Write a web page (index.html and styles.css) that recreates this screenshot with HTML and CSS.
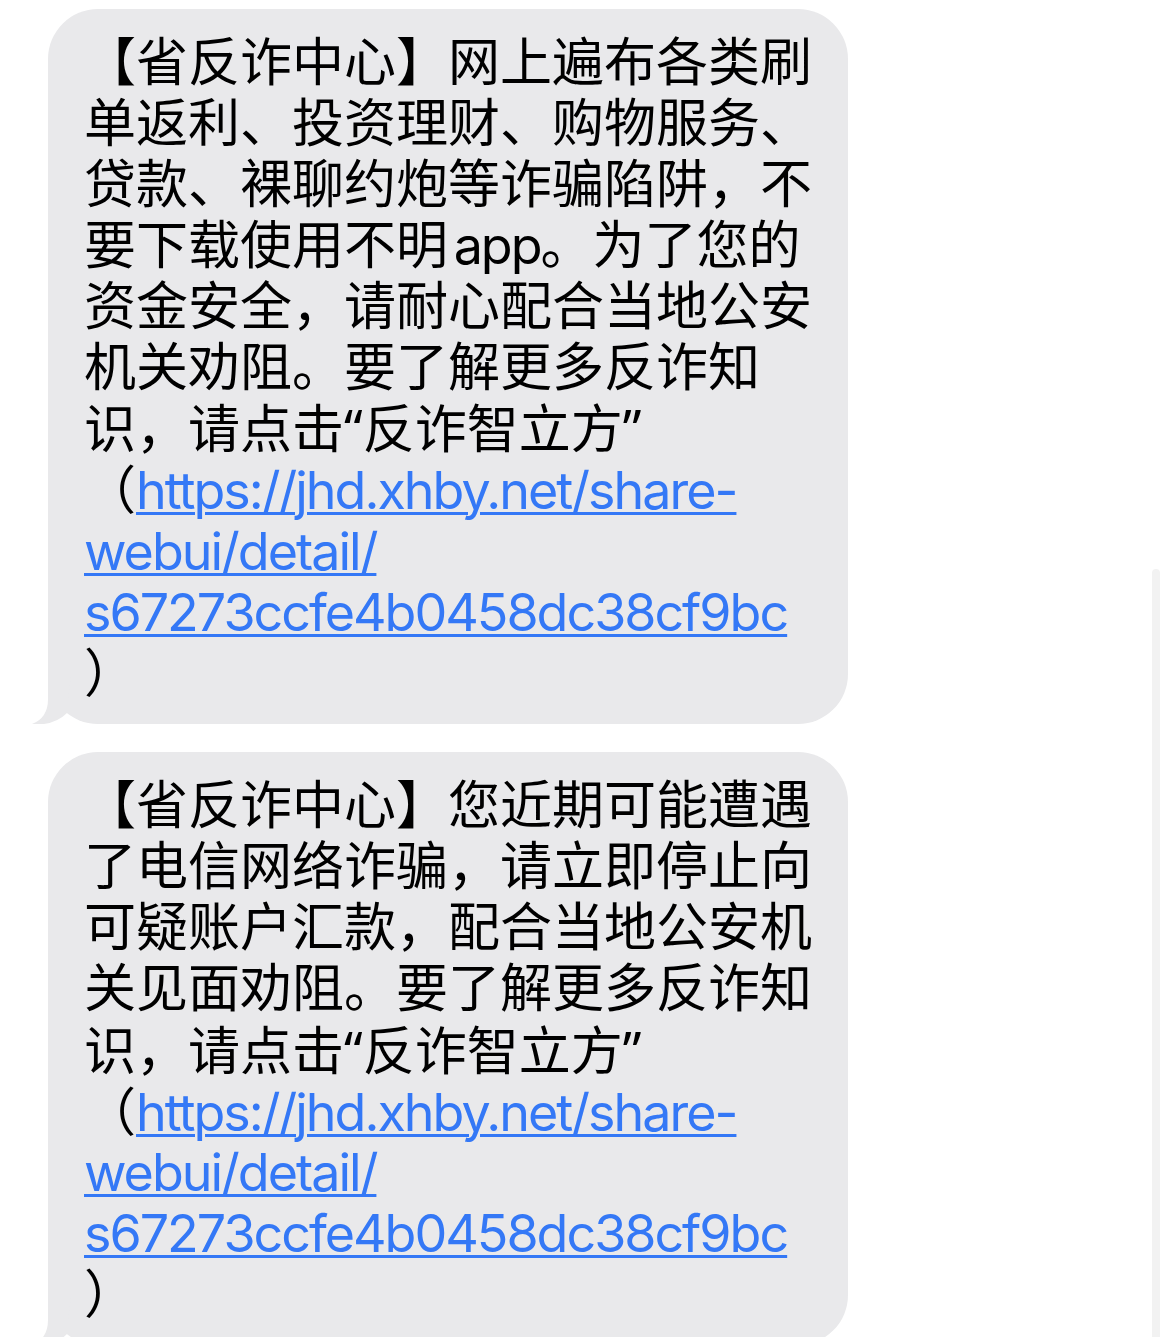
FILE: index.html
```html
<!DOCTYPE html>
<html lang="zh-CN">
<head>
<meta charset="utf-8">
<title>短信</title>
<link rel="stylesheet" href="styles.css">
</head>
<body>
<div class="thread">
  <div class="bubble">
    <p class="msg">【省反诈中心】网上遍布各类刷<br>单返利、投资理财、购物服务、<br>贷款、裸聊约炮等诈骗陷阱，不<br>要下载使用不明<span class="lat"> app</span>。为了您的<br>资金安全，请耐心配合当地公安<br>机关劝阻。要了解更多反诈知<br>识，请点击<span class="q">“</span>反诈智立方<span class="q">”</span><br>（<a class="link" href="#">https://jhd.xhby.net/share-<br>webui/detail/<br>s67273ccfe4b0458dc38cf9bc</a><br>）</p>
    <svg class="tail" viewBox="0 0 40 62" width="40" height="62" aria-hidden="true"><path d="M16,0 L16,37 Q16,56 0,62 L12,62 Q26,60 35,51 L40,0 Z"/></svg>
  </div>
  <div class="bubble">
    <p class="msg">【省反诈中心】您近期可能遭遇<br>了电信网络诈骗，请立即停止向<br>可疑账户汇款，配合当地公安机<br>关见面劝阻。要了解更多反诈知<br>识，请点击<span class="q">“</span>反诈智立方<span class="q">”</span><br>（<a class="link" href="#">https://jhd.xhby.net/share-<br>webui/detail/<br>s67273ccfe4b0458dc38cf9bc</a><br>）</p>
    <svg class="tail" viewBox="0 0 40 62" width="40" height="62" aria-hidden="true"><path d="M16,0 L16,37 Q16,56 0,62 L12,62 Q26,60 35,51 L40,0 Z"/></svg>
  </div>
</div>
<div class="scroll-indicator"></div>
</body>
</html>
```

FILE: styles.css
```css
html, body {
  margin: 0;
  padding: 0;
  background: #ffffff;
}

body {
  width: 1170px;
  height: 1337px;
  overflow: hidden;
  position: relative;
}

.thread {
  display: flex;
  flex-direction: column;
  align-items: flex-start;
  gap: 28px;
  padding: 9px 0 0 48px;
}

.bubble {
  position: relative;
  width: 800px;
  box-sizing: border-box;
  padding: 24px 30px 19px 36px;
  background: #e9e9eb;
  border-radius: 50px;
}

.msg {
  margin: 0;
  font-family: "Inter", "Noto Sans CJK SC", sans-serif;
  font-size: 52px;
  line-height: 60.9px;
  color: #000000;
  white-space: nowrap;
}

.lat {
  letter-spacing: -2px;
  word-spacing: -7px;
}

.q {
  font-family: "Noto Sans", "Noto Sans CJK SC", sans-serif;
}

.link {
  color: #3478f6;
  letter-spacing: -2px;
  text-decoration: underline;
  text-decoration-thickness: 3px;
  text-underline-offset: 3px;
}

.tail {
  position: absolute;
  left: -16px;
  bottom: 0;
  display: block;
}

.tail path {
  fill: #e9e9eb;
}

.scroll-indicator {
  position: absolute;
  left: 1152px;
  top: 569px;
  width: 8px;
  height: 820px;
  border-radius: 4px;
  background: #f2f2f2;
}
```
